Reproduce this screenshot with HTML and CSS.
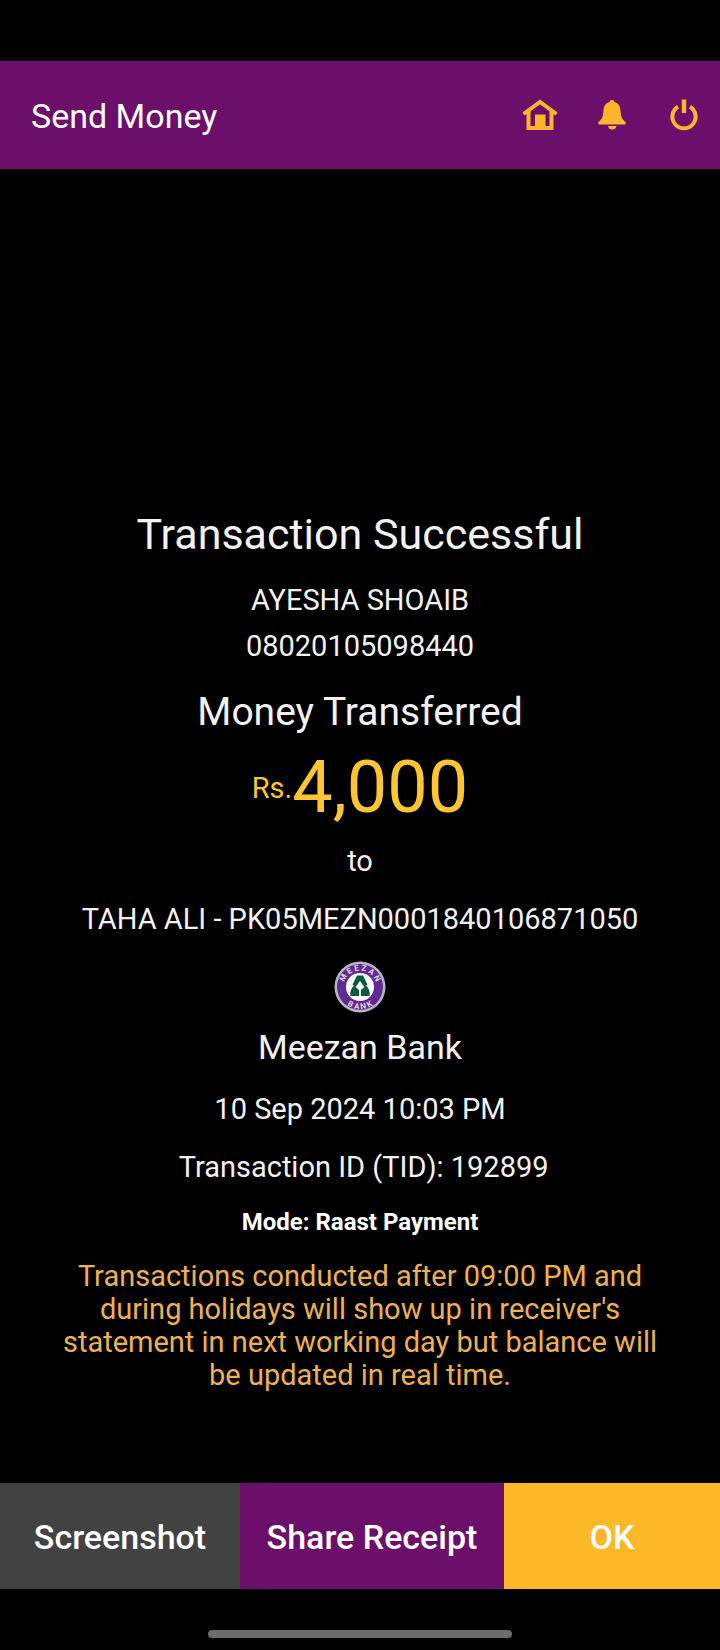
FILE: index.html
```html
<!DOCTYPE html>
<html lang="en">
<head>
<meta charset="utf-8">
<meta name="viewport" content="width=device-width, initial-scale=1">
<title>Send Money</title>
<link rel="stylesheet" href="styles.css">
</head>
<body>
<header class="topbar">
  <h1 class="topbar-title">Send Money</h1>
  <nav class="topbar-actions">
    <button class="icon-button" type="button" aria-label="Home">
      <svg class="icon" viewBox="0 0 36 36" fill="none" stroke="currentColor">
        <path d="M1.500 17 18 5l16.500 12" stroke-width="4"/>
        <path d="M6.500 14v17h23V14" stroke-width="4"/>
        <path d="M13 17.500h10.500V32H13z" fill="currentColor" stroke="none"/>
      </svg>
    </button>
    <button class="icon-button" type="button" aria-label="Notifications">
      <svg class="icon" viewBox="0 0 36 36" fill="currentColor">
        <path d="M18 3c1.300 0 2.200.8 2.500 2 4 1 5.800 4.200 6 8.500.3 6 1.500 8.700 4.800 11.300.9.700.6 2.700-.7 2.700H5.400c-1.300 0-1.600-2-.7-2.700C8 22.200 9.200 19.500 9.500 13.500c.2-4.300 2-7.500 6-8.500.3-1.200 1.200-2 2.500-2z"/>
        <path d="M14 29h8.500c-.5 2.300-2 3.600-4.200 3.600S14.500 31.300 14 29z"/>
      </svg>
    </button>
    <button class="icon-button" type="button" aria-label="Log out">
      <svg class="icon" viewBox="0 0 36 36" fill="none" stroke="currentColor" stroke-width="4">
        <path d="M18 2.500v13.500" stroke-width="4.400"/>
        <path d="M12 9.800a11.600 11.600 0 1 0 12 0"/>
      </svg>
    </button>
  </nav>
</header>

<main class="receipt">
  <h2 class="receipt-title">Transaction Successful</h2>
  <div class="sender">
    <p class="line">AYESHA SHOAIB</p>
    <p class="line">08020105098440</p>
  </div>
  <h3 class="receipt-subtitle">Money Transferred</h3>
  <p class="amount"><span class="amount-currency">Rs.</span><span class="amount-value">4,000</span></p>
  <p class="to">to</p>
  <div class="details">
    <p>TAHA ALI - PK05MEZN0001840106871050</p>
    <figure class="bank">
      <svg class="bank-logo" viewBox="0 0 52 52" role="img" aria-label="Meezan Bank logo">
        <defs>
          <path id="arc-top" d="M9.500 26a16.500 16.500 0 0 1 33 0"/>
          <path id="arc-bottom" d="M3.800 26a22.200 22.200 0 0 0 44.400 0"/>
        </defs>
        <circle cx="26" cy="26" r="25.500" fill="#b9b6c6"/>
        <circle cx="26" cy="26" r="23" fill="#5f2a91"/>
        <circle cx="26" cy="26" r="14" fill="#fff"/>
        <text class="bank-logo-text"><textPath href="#arc-top" startOffset="50%">M E E Z A N</textPath></text>
        <text class="bank-logo-text"><textPath href="#arc-bottom" startOffset="50%">B A N K</textPath></text>
        <g fill="#0b5a3c">
          <path d="M23 14.500h6l4.500 9-3 2.500-4.500-6-4.500 6-3-2.500z"/>
          <path d="M20 24.500l5 4.500v6h-8.500c-.8-4 .5-7.500 3.500-10.500z"/>
          <path d="M32 24.500l-5 4.500v6h8.500c.8-4-.5-7.500-3.500-10.500z"/>
        </g>
      </svg>
      <figcaption class="bank-name">Meezan Bank</figcaption>
    </figure>
    <p>10 Sep 2024 10:03 PM</p>
    <p>&nbsp;Transaction ID (TID): 192899</p>
  </div>
  <p class="mode">Mode: Raast Payment</p>
  <p class="notice">Transactions conducted after 09:00 PM and during holidays will show up in receiver's statement in next working day but balance will be updated in real time.</p>
</main>

<footer class="actions">
  <button class="action action-screenshot" type="button">Screenshot</button>
  <button class="action action-share" type="button">Share Receipt</button>
  <button class="action action-ok" type="button">OK</button>
</footer>
<div class="gesture-area"><div class="gesture-bar"></div></div>
</body>
</html>
```
FILE: styles.css
```css
* {
  box-sizing: border-box;
  margin: 0;
  padding: 0;
}

body {
  display: flex;
  flex-direction: column;
  min-height: 100vh;
  padding-top: 61px;
  background: #000;
  color: #f2f2f2;
  font-family: Roboto, "Liberation Sans", sans-serif;
  font-size: 29px;
  line-height: 32px;
}

button {
  border: 0;
  background: none;
  color: inherit;
  font: inherit;
  cursor: pointer;
}

.topbar {
  display: flex;
  align-items: center;
  justify-content: space-between;
  height: 108px;
  padding-left: 31px;
  background: #6b0f6b;
}

.topbar-title {
  padding-top: 2px;
  color: #fff;
  font-size: 34px;
  font-weight: 400;
  line-height: 40px;
}

.topbar-actions {
  display: flex;
}

.icon-button {
  display: grid;
  place-items: center;
  width: 72px;
  height: 72px;
  color: #fdb62b;
}

.icon {
  display: block;
  width: 36px;
  height: 36px;
}

.receipt {
  display: flex;
  flex: 1;
  flex-direction: column;
  align-items: center;
  justify-content: flex-end;
  padding: 32px 56px 91px;
  text-align: center;
}

.receipt-title {
  font-size: 43px;
  font-weight: 400;
  line-height: 52px;
}

.sender {
  margin: 17px 0 19px;
}

.line {
  line-height: 46px;
}

.receipt-subtitle {
  font-size: 39px;
  font-weight: 400;
  line-height: 48px;
}

.amount {
  display: flex;
  align-items: center;
  margin: 10px 0 15px;
  color: #fdc52f;
}

.amount-value {
  font-size: 72px;
  line-height: 84px;
}

.details {
  display: flex;
  flex-direction: column;
  gap: 26px;
  margin: 26px 0 23px;
}

.bank {
  display: flex;
  flex-direction: column;
  align-items: center;
  gap: 14px;
}

.bank-logo {
  display: block;
  width: 52px;
  height: 52px;
}

.bank-logo-text {
  fill: #e6daf0;
  font-size: 8px;
  font-weight: 700;
  text-anchor: middle;
}

.bank-name {
  font-size: 34px;
  line-height: 40px;
}

.mode {
  color: #fff;
  font-size: 24px;
  font-weight: 700;
}

.notice {
  max-width: 608px;
  margin-top: 22px;
  color: #eeb151;
  line-height: 33px;
}

.actions {
  display: grid;
  grid-template-columns: 10fr 11fr 9fr;
}

.action {
  height: 106px;
  padding-top: 2px;
  color: #fff;
  font-size: 34px;
  font-weight: 500;
}

.action-screenshot {
  background: #424242;
}

.action-share {
  background: #6b0f6b;
}

.action-ok {
  background: #fdb827;
}

.gesture-area {
  display: flex;
  justify-content: center;
  padding: 41px 0 12px;
}

.gesture-bar {
  width: 304px;
  max-width: 60%;
  height: 8px;
  border-radius: 4px;
  background: #6c6c6c;
}
```
